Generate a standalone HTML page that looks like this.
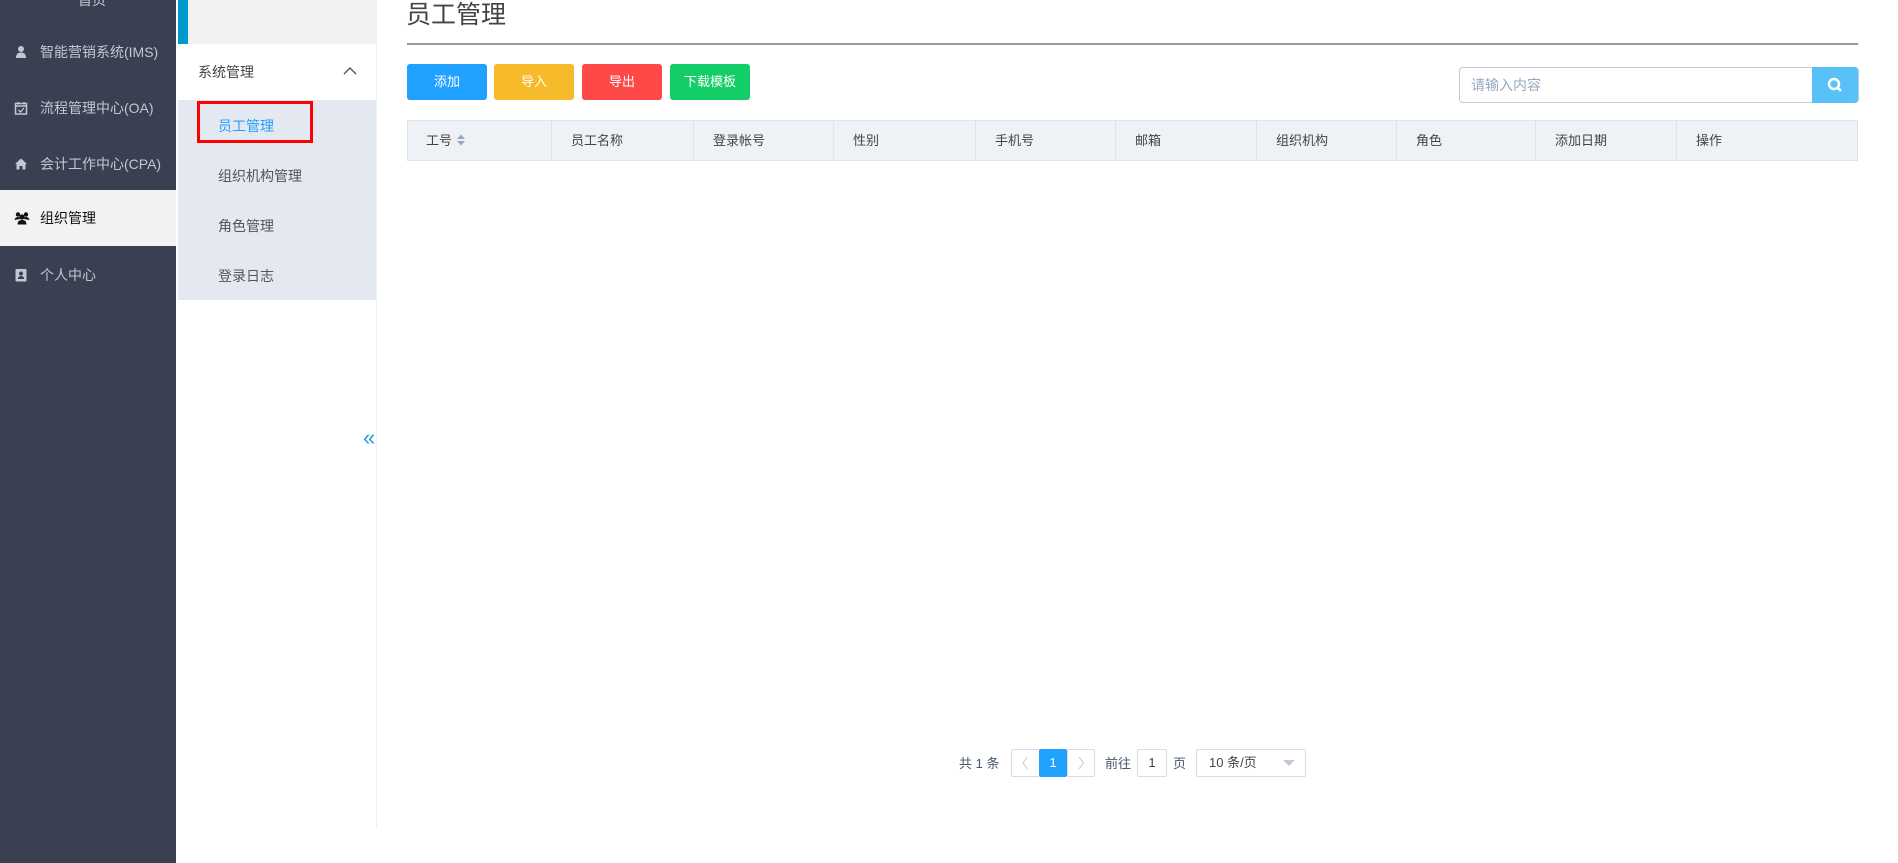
<!DOCTYPE html>
<html><head><meta charset="utf-8"><style>
*{margin:0;padding:0;box-sizing:border-box}
body{width:1898px;height:863px;position:relative;overflow:hidden;background:#fff;font-family:"Liberation Sans","Noto Sans CJK SC",sans-serif;font-size:14px;color:#333}
.abs{position:absolute}
#side{left:0;top:0;width:176px;height:863px;background:#3a3f51}
.si{position:absolute;left:0;width:176px;height:56px;line-height:56px;color:#c3c7d2;font-size:14px;padding-left:14px}
.si svg{position:absolute;left:14px;top:21px}
.si span{position:absolute;left:40px}
.si.act{background:#f1f2f4;color:#111}
#sub{left:178px;top:0;width:199px;height:828px;background:#fff;border-right:1px solid #eef0f3}
.mi{position:absolute;left:40px;font-size:14px;color:#555}
.btn{position:absolute;top:64px;width:80px;height:36px;border-radius:3px;color:#fff;font-size:13px;text-align:center;line-height:36px}
.col{position:absolute;top:120px;height:41px;line-height:41px;font-size:13px;color:#444;padding-left:19px;border-right:1px solid #dfe3ea}
.pg{position:absolute;top:749px;height:28px;line-height:26px;border:1px solid #d8dce5;border-radius:2px;font-size:13px;text-align:center;color:#444}
.lb{position:absolute;top:753px;font-size:13px;color:#48576a}
</style></head><body>
<div id="side" class="abs">
 <div class="si" style="top:-28px;padding-left:78px">首页</div>
 <div class="si" style="top:24px"><svg width="14" height="14" viewBox="0 0 14 14"><circle cx="7" cy="4" r="3" fill="#c3c7d2"/><path d="M2 13 Q2 7.5 7 7.5 Q12 7.5 12 13Z" fill="#c3c7d2"/></svg><span>智能营销系统(IMS)</span></div>
 <div class="si" style="top:80px"><svg width="14" height="14" viewBox="0 0 14 14"><rect x="1.5" y="2.5" width="11" height="10.5" fill="none" stroke="#c3c7d2" stroke-width="1.5"/><line x1="1.5" y1="5" x2="12.5" y2="5" stroke="#c3c7d2" stroke-width="1.5"/><line x1="4" y1="1" x2="4" y2="3.5" stroke="#c3c7d2" stroke-width="1.5"/><line x1="10" y1="1" x2="10" y2="3.5" stroke="#c3c7d2" stroke-width="1.5"/><path d="M4.5 9 L6.5 11 L10 7" fill="none" stroke="#c3c7d2" stroke-width="1.3"/></svg><span>流程管理中心(OA)</span></div>
 <div class="si" style="top:136px"><svg width="14" height="14" viewBox="0 0 14 14"><path d="M7 1.5 L13 7 L11.5 7 L11.5 12.5 L8.5 12.5 L8.5 9 L5.5 9 L5.5 12.5 L2.5 12.5 L2.5 7 L1 7Z" fill="#c3c7d2"/></svg><span>会计工作中心(CPA)</span></div>
 <div class="si act" style="top:190px"><svg width="16" height="14" viewBox="0 0 16 14"><circle cx="4" cy="3.5" r="2.2" fill="#111"/><circle cx="12" cy="3.5" r="2.2" fill="#111"/><circle cx="8" cy="6" r="2.6" fill="#111"/><path d="M0.5 9 Q1 6 4 6 Q6 6 6 8Z M15.5 9 Q15 6 12 6 Q10 6 10 8Z" fill="#111"/><path d="M3.5 13.5 Q3.5 9 8 9 Q12.5 9 12.5 13.5Z" fill="#111"/></svg><span>组织管理</span></div>
 <div class="si" style="top:247px"><svg width="14" height="14" viewBox="0 0 14 14"><rect x="1.5" y="1" width="11" height="12.5" rx="1" fill="#c3c7d2"/><circle cx="7" cy="5.5" r="2" fill="#3a3f51"/><path d="M3.8 11 Q4 8 7 8 Q10 8 10.2 11Z" fill="#3a3f51"/></svg><span>个人中心</span></div>
</div>
<div id="sub" class="abs">
 <div class="abs" style="left:0;top:0;width:198px;height:44px;background:#f2f2f4"></div>
 <div class="abs" style="left:0;top:0;width:10px;height:44px;background:#0099cc"></div>
 <div class="abs" style="left:20px;top:62px;font-size:14px;color:#444">系统管理</div>
 <svg class="abs" style="left:165px;top:66px" width="14" height="9" viewBox="0 0 14 9"><path d="M1 8 L7 2 L13 8" fill="none" stroke="#555" stroke-width="1.4"/></svg>
 <div class="abs" style="left:0;top:100px;width:198px;height:200px;background:#e4e8f1"></div>
 <div class="abs" style="left:19px;top:101px;width:116px;height:42px;border:3px solid #f00"></div>
 <div class="mi" style="top:116px;color:#20a0ff">员工管理</div>
 <div class="mi" style="top:166px">组织机构管理</div>
 <div class="mi" style="top:216px">角色管理</div>
 <div class="mi" style="top:266px">登录日志</div>
 <div class="abs" style="left:185px;top:425px;color:#1e9fe0;font-size:22px">«</div>
</div>
<div class="abs" style="left:406px;top:-5px;font-size:25px;color:#444">员工管理</div>
<div class="abs" style="left:407px;top:43px;width:1451px;height:2px;background:#999"></div>
<div class="btn" style="left:407px;background:#20a0ff">添加</div>
<div class="btn" style="left:494px;background:#f7ba2a">导入</div>
<div class="btn" style="left:582px;background:#ff4949">导出</div>
<div class="btn" style="left:670px;background:#13ce66">下载模板</div>
<div class="abs" style="left:1459px;top:67px;width:400px;height:36px;border:1px solid #bfcbd9;border-radius:4px;font-size:14px;color:#97a8be;line-height:34px;padding-left:11px">请输入内容</div>
<div class="abs" style="left:1812px;top:67px;width:46px;height:36px;background:#58c1f8;border-radius:0 4px 4px 0">
 <svg width="46" height="36"><circle cx="22" cy="17" r="5" fill="none" stroke="#fff" stroke-width="2.5"/><line x1="26" y1="21" x2="29" y2="24" stroke="#fff" stroke-width="2.5"/></svg>
</div>
<div class="abs" style="left:407px;top:120px;width:1451px;height:41px;background:#eef1f6;border:1px solid #dfe3ea"></div>
<div class="col" style="left:407px;width:145px">工号 <svg style="vertical-align:-2px" width="10" height="14" viewBox="0 0 10 14"><path d="M1 6 L5 1.5 L9 6Z M1 8 L5 12.5 L9 8Z" fill="#97a8be"/></svg></div>
<div class="col" style="left:552px;width:142px">员工名称</div>
<div class="col" style="left:694px;width:140px">登录帐号</div>
<div class="col" style="left:834px;width:142px">性别</div>
<div class="col" style="left:976px;width:140px">手机号</div>
<div class="col" style="left:1116px;width:141px">邮箱</div>
<div class="col" style="left:1257px;width:140px">组织机构</div>
<div class="col" style="left:1397px;width:139px">角色</div>
<div class="col" style="left:1536px;width:141px">添加日期</div>
<div class="col" style="left:1677px;width:181px;border-right:none">操作</div>
<div class="lb" style="left:959px">共 1 条</div>
<div class="pg" style="left:1011px;width:29px"><svg width="27" height="26" viewBox="0 0 27 26"><path d="M15.5 7 L11 13 L15.5 19" fill="none" stroke="#d0d4dc" stroke-width="1.3"/></svg></div>
<div class="pg" style="left:1039px;width:28px;background:#20a0ff;border-color:#20a0ff;color:#fff">1</div>
<div class="pg" style="left:1067px;width:28px"><svg width="26" height="26" viewBox="0 0 26 26"><path d="M11 7 L15.5 13 L11 19" fill="none" stroke="#d0d4dc" stroke-width="1.3"/></svg></div>
<div class="lb" style="left:1105px">前往</div>
<div class="pg" style="left:1137px;width:30px">1</div>
<div class="lb" style="left:1173px">页</div>
<div class="pg" style="left:1196px;width:110px;text-align:left;padding-left:12px">10 条/页<svg style="position:absolute;right:10px;top:10px" width="12" height="7" viewBox="0 0 12 7"><path d="M0 0 L12 0 L6 6Z" fill="#bfcbd9"/></svg></div>
</body></html>
